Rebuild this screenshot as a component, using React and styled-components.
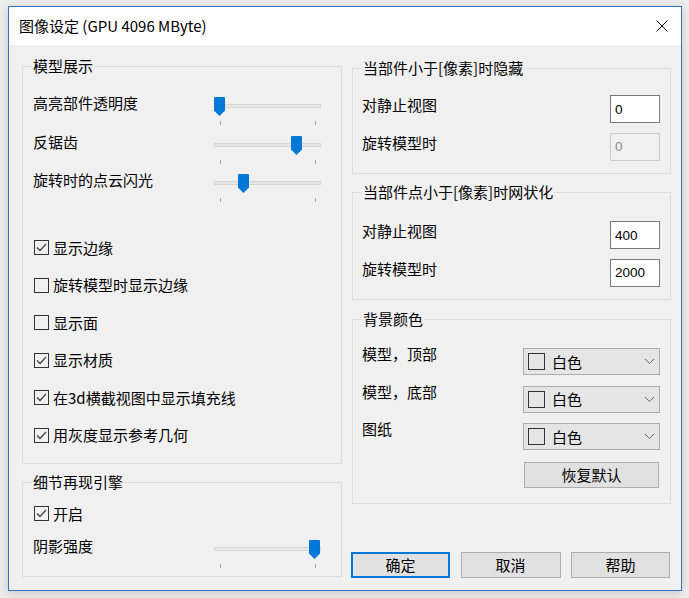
import React from "react";
import styled, { createGlobalStyle } from "styled-components";

const Global = createGlobalStyle`
  * { box-sizing: border-box; }
  html, body { margin: 0; padding: 0; background: #eeeeee; }
  body { font-family: "Noto Sans CJK SC", "Noto Sans", sans-serif; font-size: 15px; color: #000; }
`;

const Page = styled.div`
  padding: 6px 0 0 8px;
  width: 689px;
  height: 598px;
`;

const Window = styled.div`
  width: 674px;
  height: 585px;
  border: 1px solid #2f73c4;
  background: #f0f0f0;
  display: flex;
  flex-direction: column;
  box-shadow: 0 2px 10px rgba(0, 0, 0, 0.18);
`;

const TitleBar = styled.div`
  height: 38px;
  background: #fff;
  display: flex;
  align-items: center;
  padding: 0 13px 0 10px;
  flex-shrink: 0;
`;

const TitleText = styled.div`
  font-size: 15px;
  line-height: 20px;
  flex: 1;
`;

const CloseIcon = styled.svg`
  width: 12px;
  height: 12px;
  display: block;
`;

const Client = styled.div`
  flex: 1;
  display: flex;
  gap: 10px;
  padding: 0 10px 0 13px;
`;

const Column = styled.div`
  width: ${(p) => p.$w}px;
  display: flex;
  flex-direction: column;
  padding-top: ${(p) => p.$top}px;
`;

const Group = styled.div`
  position: relative;
  border: 1px solid #dcdcdc;
  height: ${(p) => p.$h}px;
  margin-top: ${(p) => p.$mt || 0}px;
  padding: ${(p) => p.$pt}px ${(p) => p.$pr || 11}px 0 ${(p) => p.$pl || 10}px;
  display: flex;
  flex-direction: column;
`;

const GroupTitle = styled.div`
  position: absolute;
  top: -11px;
  left: ${(p) => p.$left || 9}px;
  padding: 0 1px;
  background: #f0f0f0;
  line-height: 20px;
`;

const Label = styled.div`
  line-height: 20px;
  white-space: nowrap;
`;

const SliderRow = styled.div`
  height: 38.5px;
  display: flex;
  align-items: flex-start;
  justify-content: space-between;
  padding-right: 9px;
  margin-top: ${(p) => p.$mt || 0}px;
`;

const SliderBox = styled.div`
  position: relative;
  width: 107px;
  height: 30px;
  margin-top: 4px;
  padding-top: 7px;
  flex-shrink: 0;
`;

const Track = styled.div`
  height: 4px;
  background: #e7e7e7;
  border: 1px solid #d6d6d6;
`;

const Ticks = styled.div`
  display: flex;
  justify-content: space-between;
  padding: 0 5px 0 6px;
  margin-top: 13px;
`;

const Tick = styled.div`
  width: 1px;
  height: 4px;
  background: #a6a6a6;
`;

const Thumb = styled.svg`
  position: absolute;
  top: 0;
  width: 11px;
  height: 19px;
  display: block;
`;

const Slider = ({ value }) => (
  <SliderBox>
    <Track />
    <Thumb viewBox="0 0 11 19" style={{ left: `${Math.round(value * 96)}px` }}>
      <path d="M1 0 H10 Q11 0 11 1 V13.5 L5.5 19 L0 13.5 V1 Q0 0 1 0 Z" fill="#0078d7" />
    </Thumb>
    <Ticks>
      <Tick />
      <Tick />
    </Ticks>
  </SliderBox>
);

const CheckRow = styled.div`
  height: 37.5px;
  display: flex;
  align-items: center;
  gap: 4px;
  padding-left: 1px;
  margin-top: ${(p) => p.$mt || 0}px;
`;

const Box = styled.div`
  width: 15px;
  height: 15px;
  border: 1px solid #333;
  background: transparent;
  flex-shrink: 0;
  display: flex;
  align-items: center;
  justify-content: center;
`;

const CheckMark = styled.svg`
  width: 13px;
  height: 13px;
  display: block;
`;

const Check = ({ checked, children, mt }) => (
  <CheckRow $mt={mt}>
    <Box>
      {checked && (
        <CheckMark viewBox="0 0 13 13">
          <polyline points="2,6.5 5,9.5 11,3" fill="none" stroke="#444" strokeWidth="1.3" />
        </CheckMark>
      )}
    </Box>
    <Label>{children}</Label>
  </CheckRow>
);

const FieldRow = styled.div`
  height: 37.5px;
  display: flex;
  align-items: flex-start;
  justify-content: space-between;
`;

const NumInput = styled.div`
  width: 50px;
  height: 28px;
  border: 1px solid ${(p) => (p.$disabled ? "#cccccc" : "#7a7a7a")};
  background: ${(p) => (p.$disabled ? "#f0f0f0" : "#ffffff")};
  color: ${(p) => (p.$disabled ? "#8d8d8d" : "#000")};
  font-family: "Liberation Sans", Arial, sans-serif;
  font-size: 13.5px;
  display: flex;
  align-items: center;
  padding-left: 4px;
  margin-right: -1px;
`;

const SelectRow = styled.div`
  height: 37.5px;
  display: flex;
  align-items: flex-start;
  justify-content: space-between;
`;

const Select = styled.div`
  width: 137px;
  height: 27px;
  margin-top: 4px;
  margin-right: -1px;
  background: #e5e5e5;
  border: 1px solid #adadad;
  display: flex;
  align-items: center;
  padding: 0 4px 0 4px;
`;

const Swatch = styled.div`
  width: 17px;
  height: 17px;
  border: 1px solid #333;
  background: transparent;
  margin-right: 7px;
  flex-shrink: 0;
`;

const Chevron = styled.svg`
  width: 11px;
  height: 7px;
  margin-left: auto;
  display: block;
`;

const ColorSelect = ({ text }) => (
  <Select>
    <Swatch />
    <Label>{text}</Label>
    <Chevron viewBox="0 0 11 7">
      <polyline points="1,1 5.5,5.5 10,1" fill="none" stroke="#666" strokeWidth="1" />
    </Chevron>
  </Select>
);

const Button = styled.div`
  width: ${(p) => p.$w}px;
  height: ${(p) => p.$h || 26}px;
  background: #e1e1e1;
  border: ${(p) => (p.$default ? "2px solid #0078d7" : "1px solid #adadad")};
  display: flex;
  align-items: center;
  justify-content: center;
  line-height: 20px;
`;

const ResetWrap = styled.div`
  display: flex;
  justify-content: flex-end;
  margin-top: 5.5px;
`;

const ButtonBar = styled.div`
  display: flex;
  justify-content: space-between;
  margin-top: 48px;
  margin-left: -1px;
  margin-right: 1px;
`;

export default function App() {
  return (
    <>
      <Global />
      <Page>
        <Window>
          <TitleBar>
            <TitleText>图像设定 (GPU 4096 MByte)</TitleText>
            <CloseIcon viewBox="0 0 12 12">
              <path d="M0.5 0.5 L11.5 11.5 M11.5 0.5 L0.5 11.5" stroke="#111" strokeWidth="1" />
            </CloseIcon>
          </TitleBar>
          <Client>
            <Column $w={320} $top={21}>
              <Group $h={398} $pt={26}>
                <GroupTitle>模型展示</GroupTitle>
                <SliderRow>
                  <Label>高亮部件透明度</Label>
                  <Slider value={0} />
                </SliderRow>
                <SliderRow>
                  <Label>反锯齿</Label>
                  <Slider value={0.8} />
                </SliderRow>
                <SliderRow>
                  <Label>旋转时的点云闪光</Label>
                  <Slider value={0.25} />
                </SliderRow>
                <Check checked mt={20.5}>显示边缘</Check>
                <Check>旋转模型时显示边缘</Check>
                <Check>显示面</Check>
                <Check checked>显示材质</Check>
                <Check checked>在3d横截视图中显示填充线</Check>
                <Check checked>用灰度显示参考几何</Check>
              </Group>
              <Group $h={95} $mt={18} $pt={12}>
                <GroupTitle>细节再现引擎</GroupTitle>
                <Check checked>开启</Check>
                <SliderRow $mt={3.5}>
                  <Label>阴影强度</Label>
                  <Slider value={0.99} />
                </SliderRow>
              </Group>
            </Column>
            <Column $w={319} $top={23}>
              <Group $h={106} $pt={26} $pl={9}>
                <GroupTitle>当部件小于[像素]时隐藏</GroupTitle>
                <FieldRow>
                  <Label>对静止视图</Label>
                  <NumInput>0</NumInput>
                </FieldRow>
                <FieldRow>
                  <Label>旋转模型时</Label>
                  <NumInput $disabled>0</NumInput>
                </FieldRow>
              </Group>
              <Group $h={108} $mt={18} $pt={28} $pl={9}>
                <GroupTitle>当部件点小于[像素]时网状化</GroupTitle>
                <FieldRow>
                  <Label>对静止视图</Label>
                  <NumInput>400</NumInput>
                </FieldRow>
                <FieldRow>
                  <Label>旋转模型时</Label>
                  <NumInput>2000</NumInput>
                </FieldRow>
              </Group>
              <Group $h={185} $mt={19} $pt={24} $pl={9}>
                <GroupTitle>背景颜色</GroupTitle>
                <SelectRow>
                  <Label>模型，顶部</Label>
                  <ColorSelect text="白色" />
                </SelectRow>
                <SelectRow>
                  <Label>模型，底部</Label>
                  <ColorSelect text="白色" />
                </SelectRow>
                <SelectRow>
                  <Label>图纸</Label>
                  <ColorSelect text="白色" />
                </SelectRow>
                <ResetWrap>
                  <Button $w={135} $h={26}>恢复默认</Button>
                </ResetWrap>
              </Group>
              <ButtonBar>
                <Button $w={99} $default>确定</Button>
                <Button $w={100}>取消</Button>
                <Button $w={99}>帮助</Button>
              </ButtonBar>
            </Column>
          </Client>
        </Window>
      </Page>
    </>
  );
}
